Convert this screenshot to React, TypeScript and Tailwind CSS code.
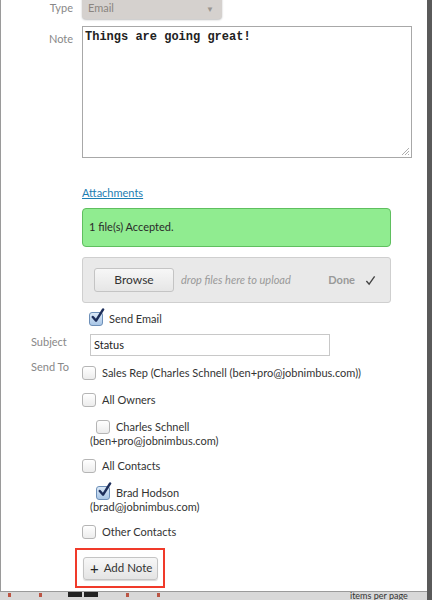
import React from "react";

const font = { fontFamily: "Lato, 'Open Sans', sans-serif" };

const Box = ({ checked }: { checked?: boolean }) => (
	<span className="relative inline-block w-[14px] h-[14px] shrink-0">
		<span
			className={`absolute inset-0 rounded-[3px] border ${
				checked
					? "border-[#6d8fb8] bg-gradient-to-b from-[#dbe9f7] to-[#a9c6e6]"
					: "border-[#b5b5b5] bg-gradient-to-b from-white to-[#ececec]"
			}`}
		></span>
		{checked && (
			<svg
				viewBox="0 0 16 16"
				className="absolute left-[1px] top-[-4px] w-[15px] h-[16px]"
			>
				<path
					d="M3 9 L6.5 13 L14 1"
					fill="none"
					stroke="#1d2e5a"
					strokeWidth="2.6"
					strokeLinecap="round"
					strokeLinejoin="round"
				/>
			</svg>
		)}
	</span>
);

const Check = ({
	label,
	checked,
	className,
}: {
	label: string;
	checked?: boolean;
	className?: string;
}) => (
	<div className={`flex items-center h-[14px] gap-[6px] ${className || ""}`}>
		<Box checked={checked} />
		<span className="text-[11px] leading-[14px] text-[#333]">{label}</span>
	</div>
);

export default function App() {
	return (
		<div className="w-[432px] h-[600px] flex overflow-hidden bg-[#5a5a5a]" style={font}>
			<div className="w-[427px] flex flex-col">
				<div className="h-[594px] bg-white border-l border-b border-[#9a9a9a]">
					{/* type */}
					<div className="flex items-center mt-[-6px]">
						<span className="w-[72px] text-right text-[11px] text-[#888] pt-[4px]">Type</span>
						<div className="ml-[9px] w-[140px] h-[25px] rounded-b-[4px] bg-[#d5d1ce] shadow-[0_1px_2px_rgba(0,0,0,0.25)] flex items-center justify-between pl-[6px] pr-[8px]">
							<span className="text-[11px] text-[#8a8580] pt-[4px]">Email</span>
							<span className="text-[8px] text-[#9a9591] pt-[4px]">▼</span>
						</div>
					</div>
					{/* note */}
					<div className="flex items-start mt-[7px]">
						<span className="w-[72px] text-right text-[11px] text-[#888] pt-[5px]">Note</span>
						<div className="ml-[9px] w-[330px] h-[132px] border border-[#a8a8a8] relative">
							<div
								className="pl-[2px] pt-[1px] text-[12px] font-bold text-[#222]"
								style={{ fontFamily: "'Liberation Mono', monospace" }}
							>
								Things are going great!
							</div>
							<svg viewBox="0 0 10 10" className="absolute right-[1px] bottom-[1px] w-[10px] h-[10px]">
								<path d="M9 2 L2 9 M9 5 L5 9 M9 8 L8 9" stroke="#999" strokeWidth="0.8" />
							</svg>
						</div>
					</div>
					{/* attachments */}
					<div className="ml-[81px] mt-[28px] text-[11px] text-[#1d7eb3] underline leading-[14px]">
						Attachments
					</div>
					<div className="ml-[81px] mt-[8px] w-[309px] h-[39px] rounded-[4px] border border-[#5fbf5f] bg-[#90ec90] flex items-center pl-[6px] text-[11px] text-[#2a2a2a]">
						1 file(s) Accepted.
					</div>
					<div className="ml-[81px] mt-[10px] w-[309px] h-[46px] rounded-[3px] border border-[#cfcfcf] bg-[#e9e9e9] flex items-center pl-[11px]">
						<div className="w-[80px] h-[24px] rounded-[3px] border border-[#c4c4c4] bg-gradient-to-b from-[#f7f7f7] to-[#e6e6e6] flex items-center justify-center text-[12px] text-[#333]">
							Browse
						</div>
						<span className="ml-[7px] text-[11px] italic text-[#999]">drop files here to upload</span>
						<span className="ml-auto text-[11px] font-bold text-[#999]">Done</span>
						<svg viewBox="0 0 12 12" className="ml-[10px] mr-[14px] w-[11px] h-[11px]">
							<path d="M1.5 6.5 L4.5 10 L10.5 1.5" fill="none" stroke="#444" strokeWidth="1.5" />
						</svg>
					</div>
					<Check label="Send Email" checked className="ml-[88px] mt-[9px]" />
					{/* subject */}
					<div className="flex items-center mt-[8px]">
						<span className="ml-[30px] w-[59px] text-[11px] text-[#888] mt-[-6px]">Subject</span>
						<div className="w-[240px] h-[22px] border border-[#c8c8c8] flex items-center pl-[3px] text-[11px] text-[#222]">
							Status
						</div>
					</div>
					{/* send to */}
					<div className="flex mt-[4px]">
						<span className="ml-[30px] w-[51px] text-[11px] leading-[14px] text-[#888]">Send To</span>
						<div className="flex flex-col">
							<Check label="Sales Rep (Charles Schnell (ben+pro@jobnimbus.com))" className="mt-[6px]" />
							<Check label="All Owners" className="mt-[13px]" />
							<Check label="Charles Schnell" className="mt-[13px] ml-[14px] gap-[3px]" />
							<span className="ml-[8px] text-[11px] text-[#333] leading-[13px]">(ben+pro@jobnimbus.com)</span>
							<Check label="All Contacts" className="mt-[12px]" />
							<Check label="Brad Hodson" checked className="mt-[13px] ml-[14px] gap-[3px]" />
							<span className="ml-[8px] text-[11px] text-[#333] leading-[13px]">(brad@jobnimbus.com)</span>
							<Check label="Other Contacts" className="mt-[12px]" />
						</div>
					</div>
					{/* add note */}
					<div className="ml-[74px] mt-[9px] w-[90px] h-[40px] border-[2px] border-[#f03a2a] flex items-center pl-[6px]">
						<div className="w-[75px] h-[23px] rounded-[3px] border border-[#c4c4c4] bg-gradient-to-b from-[#f7f7f7] to-[#e4e4e4] flex items-center pl-[6px] gap-[5px] text-[11.5px] text-[#333] shadow-[0_1px_1px_rgba(0,0,0,0.15)]">
							<span className="text-[15px] leading-none text-[#222]">+</span>
							Add Note
						</div>
					</div>
				</div>
				<div className="flex-1 bg-[#d8d8d8] flex items-start gap-[10px] pl-[8px] text-[9px] text-[#333] leading-[9px]">
					<span className="w-[3px] h-[4px] bg-[#b54] mt-[1px]"></span>
					<span className="w-[3px] h-[4px] bg-[#b54] ml-[18px] mt-[1px]"></span>
					<span className="w-[14px] h-[5px] bg-[#222] ml-[16px]"></span>
					<span className="w-[14px] h-[5px] bg-[#222] ml-[-8px]"></span>
					<span className="w-[3px] h-[4px] bg-[#b54] ml-[18px] mt-[1px]"></span>
					<span className="w-[3px] h-[4px] bg-[#b54] ml-[18px] mt-[1px]"></span>
					<span className="ml-[180px] mt-[-1px]">items per page</span>
				</div>
			</div>
			<div className="flex-1 bg-[#5a5a5a]"></div>
		</div>
	);
}
